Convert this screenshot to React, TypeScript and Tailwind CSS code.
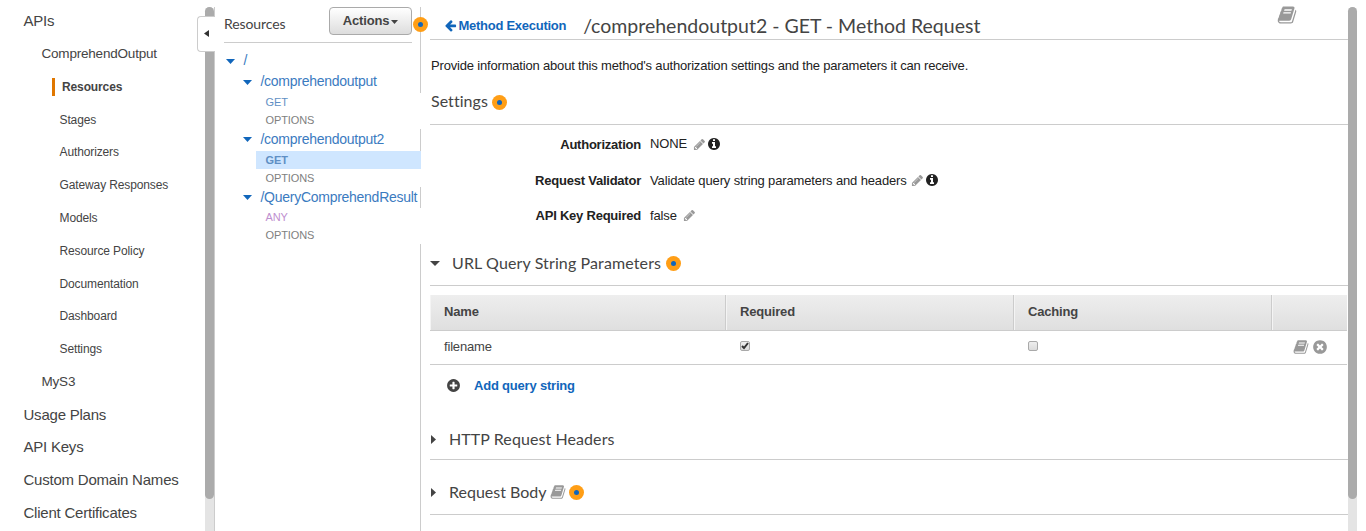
import type { ReactNode } from 'react';

const disc =
  'q0 209-103 385.500t-279.500 279.500-385.500 103-385.500-103-279.500-279.500-103-385.500 103-385.500 279.500-279.500 385.500-103 385.500 103 279.500 279.500 103 385.500z';

const paths = {
  book: 'M1703 478q40 57 18 129l-275 906q-19 64-76.500 107.500t-122.500 43.500h-923q-77 0-148.500-53.500t-99.500-131.500q-24-67-2-127 0-4 3-27t4-37q1-8-3-21.500t-3-19.500q2-11 8-21t16.500-23.500 16.500-23.500q23-38 45-91.500t30-91.500q3-10 .5-30t-.5-28q3-11 17-28t17-23q21-36 42-92t25-90q1-9-2.500-32t.5-28q4-13 22-30.500t22-22.500q19-26 42.500-84.500t27.500-96.500q1-8-3-25.500t-2-26.500q2-8 9-18t18-23 17-21q8-12 16.500-30.500t15-35 16-36 19.500-32 26.500-23.500 36-11.500 47.500 5.500l-1 3q38-9 51-9h761q74 0 114 56t18 130l-274 906q-36 119-71.500 153.500t-128.500 34.500h-869q-27 0-38 15-11 16-1 43 24 70 144 70h923q29 0 56-15.500t35-41.500l300-987q7-22 5-57 38 15 59 43zm-1064 2q-4 13 2 22.500t20 9.500h608q13 0 25.500-9.500t16.500-22.500l21-64q4-13-2-22.500t-20-9.500h-608q-13 0-25.500 9.500t-16.500 22.500zm-83 256q-4 13 2 22.500t20 9.500h608q13 0 25.500-9.500t16.500-22.500l21-64q4-13-2-22.500t-20-9.500h-608q-13 0-25.500 9.500t-16.500 22.500z',
  pencil:
    'M491 1536l91-91-235-235-91 91v107h128v128h107zm523-928q0-22-22-22-10 0-17 7l-542 542q-7 7-7 17 0 22 22 22 10 0 17-7l542-542q7-7 7-17zm-54-192l416 416-832 832h-416v-416zm683 96q0 53-37 90l-166 166-416-416 166-165q36-38 90-38 53 0 91 38l235 234q37 39 37 91z',
  info:
    'M1152 1376v-160q0-14-9-23t-23-9h-96v-512q0-14-9-23t-23-9h-320q-14 0-23 9t-9 23v160q0 14 9 23t23 9h96v320h-96q-14 0-23 9t-9 23v160q0 14 9 23t23 9h448q14 0 23-9t9-23zm-128-896v-160q0-14-9-23t-23-9h-192q-14 0-23 9t-9 23v160q0 14 9 23t23 9h192q14 0 23-9t9-23zm640 416' +
    disc,
  plus:
    'M1344 960v-128q0-26-19-45t-45-19h-256v-256q0-26-19-45t-45-19h-128q-26 0-45 19t-19 45v256h-256q-26 0-45 19t-19 45v128q0 26 19 45t45 19h256v256q0 26 19 45t45 19h128q26 0 45-19t19-45v-256h256q26 0 45-19t19-45zm320-64' +
    disc,
  times:
    'M1277 1122q0-26-19-45l-181-181 181-181q19-19 19-45 0-27-19-46l-90-90q-19-19-46-19-26 0-45 19l-181 181-181-181q-19-19-45-19-27 0-46 19l-90 90q-19 19-19 46 0 26 19 45l181 181-181 181q-19 19-19 45 0 27 19 46l90 90q19 19 46 19 26 0 45-19l181-181 181 181q19 19 45 19 27 0 46-19l90-90q19-19 19-46zm387-226' +
    disc,
  arrow:
    'M1664 896v128q0 53-32.500 90.500t-84.500 37.500h-704l293 294q38 36 38 90t-38 90l-75 76q-37 37-90 37-52 0-91-37l-651-652q-37-37-37-90 0-52 37-91l651-650q38-38 91-38 52 0 90 38l75 74q38 38 38 91t-38 91l-293 293h704q52 0 84.500 37.500t32.500 90.500z',
};

function Icon({ name, className }: { name: keyof typeof paths; className: string }) {
  return (
    <svg viewBox="0 0 1792 1792" fill="currentColor" className={`shrink-0 ${className}`}>
      <path d={paths[name]} />
    </svg>
  );
}

function Caret({ dir, className }: { dir: 'down' | 'right' | 'left'; className: string }) {
  const d = { down: 'M0 0h10L5 5z', right: 'M0 0v10l5-5z', left: 'M5 0v10L0 5z' }[dir];
  return (
    <svg
      viewBox={dir === 'down' ? '0 0 10 5' : '0 0 5 10'}
      preserveAspectRatio="none"
      fill="currentColor"
      className={`shrink-0 ${className}`}
    >
      <path d={d} />
    </svg>
  );
}

function Hotspot({ className = '' }: { className?: string }) {
  return (
    <span className={`flex size-[15px] shrink-0 items-center justify-center rounded-full bg-[#ff9e16] ${className}`}>
      <span className="size-[5px] rounded-full bg-[#1166bb]" />
    </span>
  );
}

const nav: { label: string; level: number; active?: boolean }[] = [
  { label: 'APIs', level: 1 },
  { label: 'ComprehendOutput', level: 2 },
  { label: 'Resources', level: 3, active: true },
  { label: 'Stages', level: 3 },
  { label: 'Authorizers', level: 3 },
  { label: 'Gateway Responses', level: 3 },
  { label: 'Models', level: 3 },
  { label: 'Resource Policy', level: 3 },
  { label: 'Documentation', level: 3 },
  { label: 'Dashboard', level: 3 },
  { label: 'Settings', level: 3 },
  { label: 'MyS3', level: 2 },
  { label: 'Usage Plans', level: 1 },
  { label: 'API Keys', level: 1 },
  { label: 'Custom Domain Names', level: 1 },
  { label: 'Client Certificates', level: 1 },
];

const levelClass: Record<number, string> = {
  1: 'pl-[23.500px] text-[15px] tracking-[-0.22px]',
  2: 'pl-[41.500px] text-[13.5px] tracking-[-0.2px]',
  3: 'pl-[59.500px] text-[12px] tracking-[-0.12px]',
};

function Scrollbar() {
  return (
    <div className="mt-[7px] w-[9px] shrink-0 rounded-t-full bg-[#e4e4e4]">
      <div className="h-[492px] rounded-full bg-[#ababab]" />
    </div>
  );
}

function Resource({ label, className }: { label: string; className: string }) {
  return (
    <div className={`flex items-center text-[14px] tracking-[-0.27px] text-[#3b7bbf] ${className}`}>
      <Caret dir="down" className="-mt-px mr-2 h-[5px] w-[9px] text-[#1166bb]" />
      <span className="-mt-[2px] pl-[0.500px]">{label}</span>
    </div>
  );
}

function Method({ label, className }: { label: string; className: string }) {
  return (
    <div className={`-mr-px ml-[41px] h-[18px] pl-[9.500px] text-[11px] leading-[19px] tracking-[-0.1px] ${className}`}>
      {label}
    </div>
  );
}

function Setting({ label, children, className }: { label: string; children: ReactNode; className: string }) {
  return (
    <div className={`flex items-center text-[13px] ${className}`}>
      <div className="w-[211px] text-right font-bold tracking-[-0.23px]">{label}</div>
      <div className="flex items-center pl-[9px] tracking-[-0.14px]">{children}</div>
    </div>
  );
}

function Checkbox({ checked }: { checked?: boolean }) {
  return (
    <span className="flex size-[10px] items-center justify-center rounded-[2px] border border-[#a9a9a9] bg-linear-to-b from-[#eeeeee] to-[#dcdcdc]">
      {checked && (
        <svg viewBox="0 0 8 8" className="size-2" fill="none" stroke="#333" strokeWidth="2">
          <path d="M1 4l2 2 4-5" />
        </svg>
      )}
    </span>
  );
}

const headCell = 'h-full border-r border-[#cccccc] border-l border-l-[#f4f4f4] pl-[13px] leading-[33px]';
const sectionTitle = "font-['Lato',sans-serif] text-[16px]";

export default function App() {
  return (
    <div className="flex h-[531px] w-[1366px] overflow-hidden bg-white font-['Liberation_Sans',Arial,sans-serif] whitespace-nowrap text-[#444444]">
      <nav className="w-[205px] shrink-0 pt-[4.900px]">
        {nav.map((n) => (
          <div key={n.label} className={`flex h-[32.800px] items-center ${levelClass[n.level]}`}>
            {n.active ? (
              <span className="-ml-[7.500px] border-l-3 border-[#e07700] pl-[7px] leading-[18px] font-bold">
                {n.label}
              </span>
            ) : (
              n.label
            )}
          </div>
        ))}
      </nav>

      <div className="relative flex shrink-0">
        <Scrollbar />
        <div className="mt-[7px] w-px bg-[#cccccc]" />
        <div className="absolute top-4 -left-2 flex h-9 w-[18px] items-center rounded-l-[4px] border border-r-0 border-[#cccccc] bg-white pl-[6px]">
          <Caret dir="left" className="-mt-px h-[7px] w-[5px] text-[#333333]" />
        </div>
      </div>

      <aside className="relative mt-[7px] w-[206px] shrink-0 border-r border-[#cccccc]">
        <div className="mr-2 ml-[9px] flex h-9 justify-between border-b border-[#cccccc]">
          <span className="pt-[7px] font-['Lato',sans-serif] text-[14px] leading-5 tracking-[-0.1px]">Resources</span>
          <button className="flex h-7 w-[83px] items-center justify-center gap-[2px] rounded-[4px] border border-[#aaaaaa] bg-linear-to-b from-white to-[#dddddd] text-[13px] font-bold tracking-[-0.15px]">
            Actions
            <Caret dir="down" className="mt-px h-[4px] w-[7px]" />
          </button>
        </div>
        <Hotspot className="absolute top-[10px] -right-2" />
        <div className="pt-2">
          <Resource label="/" className="h-[21px] pl-[11px]" />
          <Resource label="/comprehendoutput" className="h-[21px] pl-[28px]" />
          <Method label="GET" className="bg-white text-[#5f8fc4]" />
          <Method label="OPTIONS" className="bg-white text-[#808080]" />
          <Resource label="/comprehendoutput2" className="h-[22px] pl-[28px]" />
          <Method label="GET" className="bg-[#cfe6ff] font-bold text-[#5f8fc4]" />
          <Method label="OPTIONS" className="bg-white text-[#808080]" />
          <Resource label="/QueryComprehendResult" className="h-[21px] pt-px pl-[28px]" />
          <Method label="ANY" className="bg-white text-[#be8fcf]" />
          <Method label="OPTIONS" className="bg-white text-[#808080]" />
        </div>
      </aside>

      <main className="w-[927px] shrink-0 pl-[9px]">
        <header className="flex h-10 border-b border-[#cccccc]">
          <a className="flex items-center gap-[2px] pt-[12px] pl-[13.500px] text-[13px] font-bold tracking-[-0.27px] text-[#1166bb]">
            <Icon name="arrow" className="size-[13px]" />
            Method Execution
          </a>
          <h1 className="pt-[14px] pl-[17px] font-['Lato',sans-serif] text-[19.500px] leading-[23px]">
            /comprehendoutput2 - GET - Method Request
          </h1>
          <Icon name="book" className="mt-[5px] mr-[51px] ml-auto size-5 text-[#999999]" />
        </header>
        <p className="h-[50px] pt-[17px] pl-px text-[13px] leading-[17px] tracking-[-0.18px] text-[#222222]">
          Provide information about this method's authorization settings and the parameters it can receive.
        </p>
        <div className="flex h-[35px] gap-1 border-b border-[#cccccc] pl-px">
          <h2 className={`-mt-px leading-6 tracking-[0.05px] ${sectionTitle}`}>Settings</h2>
          <Hotspot className="mt-[5px]" />
        </div>
        <div className="h-[116px] pt-[7px] text-[#222222]">
          <Setting label="Authorization" className="h-[26px]">
            <span className="-mt-[2px]">NONE</span>
            <Icon name="pencil" className="-mt-px ml-[6px] size-[13px] text-[#999999]" />
            <Icon name="info" className="-mt-[2px] ml-px size-[14px]" />
          </Setting>
          <Setting label="Request Validator" className="h-[46px]">
            Validate query string parameters and headers
            <Icon name="pencil" className="-mt-px ml-[4px] size-[13px] text-[#999999]" />
            <Icon name="info" className="-mt-[2px] ml-px size-[14px]" />
          </Setting>
          <Setting label="API Key Required" className="h-[24px]">
            false
            <Icon name="pencil" className="-mt-px ml-[6px] size-[13px] text-[#999999]" />
          </Setting>
        </div>
        <div className="flex h-[45px] items-center border-b border-[#cccccc]">
          <Caret dir="down" className="h-[5px] w-[10px]" />
          <h2 className={`pl-3 tracking-[0.12px] ${sectionTitle}`}>URL Query String Parameters</h2>
          <Hotspot className="ml-[5px]" />
        </div>

        <div className="mt-[9px] mr-px text-[13px] tracking-[-0.18px]">
          <div className="grid h-9 grid-cols-[296px_288px_258px_1fr] border-b border-[#cccccc] bg-linear-to-b from-[#eeeeee] to-[#dfdfdf] font-bold">
            <div className={headCell}>Name</div>
            <div className={headCell}>Required</div>
            <div className={headCell}>Caching</div>
            <div className="border-l border-[#f4f4f4]" />
          </div>
          <div className="grid h-[34px] grid-cols-[296px_288px_258px_1fr] items-center border-b border-[#cccccc]">
            <div className="pb-[2px] pl-[14px]">filename</div>
            <div className="pb-[3px] pl-[14px]">
              <Checkbox checked />
            </div>
            <div className="pb-[3px] pl-[14px]">
              <Checkbox />
            </div>
            <div className="flex items-center gap-[3px] pb-px pl-[21px] text-[#999999]">
              <Icon name="book" className="size-4" />
              <Icon name="times" className="size-4" />
            </div>
          </div>
        </div>
        <div className="flex h-[41px] items-center pl-4 text-[13px] font-bold tracking-[-0.2px]">
          <Icon name="plus" className="size-[15px]" />
          <a className="pl-[13px] text-[#1166bb]">Add query string</a>
        </div>
        <div className="mt-[13px] flex h-[41px] items-center border-b border-[#cccccc]">
          <Caret dir="right" className="ml-px h-[9px] w-[5px]" />
          <h2 className={`pl-[13px] tracking-[0.08px] ${sectionTitle}`}>HTTP Request Headers</h2>
        </div>
        <div className="mt-[11px] flex h-[44px] items-center border-b border-[#cccccc]">
          <Caret dir="right" className="ml-px h-[9px] w-[5px]" />
          <h2 className={`-mt-[2px] pl-[13px] ${sectionTitle}`}>Request Body</h2>
          <Icon name="book" className="-mt-px ml-[3px] size-4 text-[#999999]" />
          <Hotspot className="ml-[3px]" />
        </div>
      </main>
      <Scrollbar />
    </div>
  );
}
